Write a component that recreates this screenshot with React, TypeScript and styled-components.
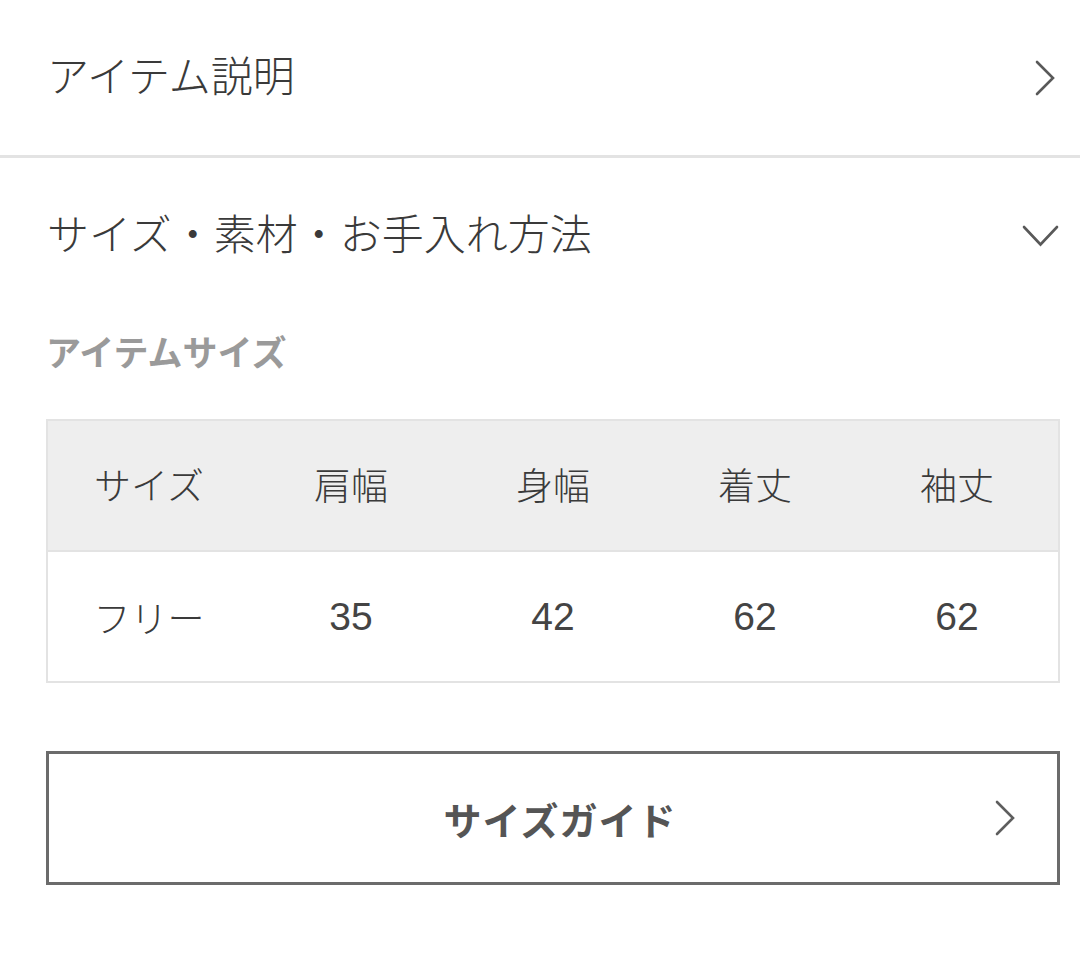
import styled, { createGlobalStyle } from 'styled-components';

const GlobalStyle = createGlobalStyle`
  html, body {
    margin: 0;
    padding: 0;
    background: #fff;
  }
  body {
    font-family: 'Liberation Sans', 'Noto Sans CJK JP', sans-serif;
    color: #333;
  }
`;

const sizeColumns = ['サイズ', '肩幅', '身幅', '着丈', '袖丈'];
const sizeRows = [['フリー', '35', '42', '62', '62']];

const Page = styled.div`
  display: flex;
  flex-direction: column;
  width: 1080px;
`;

const AccordionHead = styled.div<{ $divider?: boolean }>`
  display: flex;
  align-items: center;
  justify-content: space-between;
  height: ${(p) => (p.$divider ? '155px' : '156px')};
  padding: 0 20px 0 47px;
  border-bottom: ${(p) => (p.$divider ? '3px solid #e3e3e3' : 'none')};
`;

const HeadTitle = styled.span`
  font-size: 42px;
  font-weight: 300;
  line-height: 1;
  color: #3a3a3a;
`;

const IconSlot = styled.span<{ $w: number }>`
  display: flex;
  justify-content: center;
  width: ${(p) => p.$w}px;
  color: #595959;
`;

const Content = styled.div`
  display: flex;
  flex-direction: column;
  padding: 0 20px 0 46px;
`;

const SectionLabel = styled.div`
  margin-top: 20px;
  font-size: 35px;
  font-weight: 700;
  line-height: 40px;
  color: #9a9a9a;
`;

const SizeTable = styled.div`
  display: grid;
  grid-template-columns: repeat(5, 1fr);
  margin-top: 45px;
  border: 2px solid #e3e3e3;
`;

const Cell = styled.div<{ $head?: boolean; $num?: boolean }>`
  display: flex;
  align-items: center;
  justify-content: center;
  box-sizing: border-box;
  height: ${(p) => (p.$head ? '131px' : '129px')};
  padding-bottom: ${(p) => (p.$head ? '3px' : '0')};
  background: ${(p) => (p.$head ? '#eeeeee' : '#fff')};
  border-bottom: ${(p) => (p.$head ? '2px solid #e3e3e3' : 'none')};
  font-size: ${(p) => (p.$num ? '39px' : '37px')};
  font-weight: 300;
  color: ${(p) => (p.$num ? '#444' : '#3a3a3a')};
`;

const GuideButton = styled.button`
  position: relative;
  display: flex;
  align-items: center;
  justify-content: center;
  box-sizing: border-box;
  height: 134px;
  margin-top: 68px;
  padding: 0 0 0 14px;
  background: #fff;
  border: 3px solid #6b6b6b;
  font-family: inherit;
  font-size: 38px;
  font-weight: 700;
  letter-spacing: 1px;
  color: #555;
  cursor: pointer;
`;

const ButtonArrow = styled.span`
  position: absolute;
  right: 42px;
  top: 50%;
  transform: translateY(-50%);
  display: flex;
  color: #5e5e5e;
`;

function ChevronRight({ w = 20, h = 36 }: { w?: number; h?: number }) {
  return (
    <svg width={w} height={h} viewBox={`0 0 ${w} ${h}`} fill="none">
      <path
        d={`M2 2 L${w - 2} ${h / 2} L2 ${h - 2}`}
        stroke="currentColor"
        strokeWidth="2.6"
        strokeLinecap="round"
        strokeLinejoin="miter"
      />
    </svg>
  );
}

function ChevronDown() {
  return (
    <svg width="37" height="22" viewBox="0 0 37 22" fill="none">
      <path
        d="M2 2 L18.5 19.5 L35 2"
        stroke="currentColor"
        strokeWidth="2.6"
        strokeLinecap="round"
      />
    </svg>
  );
}

export default function App() {
  return (
    <Page>
      <GlobalStyle />
      <AccordionHead $divider>
        <HeadTitle>アイテム説明</HeadTitle>
        <IconSlot $w={30}>
          <ChevronRight />
        </IconSlot>
      </AccordionHead>

      <AccordionHead>
        <HeadTitle>サイズ・素材・お手入れ方法</HeadTitle>
        <IconSlot $w={40}>
          <ChevronDown />
        </IconSlot>
      </AccordionHead>

      <Content>
        <SectionLabel>アイテムサイズ</SectionLabel>
        <SizeTable>
          {sizeColumns.map((c) => (
            <Cell key={c} $head>
              {c}
            </Cell>
          ))}
          {sizeRows.map((row) =>
            row.map((v, i) => (
              <Cell key={`${row[0]}-${i}`} $num={i > 0}>
                {v}
              </Cell>
            )),
          )}
        </SizeTable>

        <GuideButton type="button">
          サイズガイド
          <ButtonArrow>
            <ChevronRight />
          </ButtonArrow>
        </GuideButton>
      </Content>
    </Page>
  );
}
